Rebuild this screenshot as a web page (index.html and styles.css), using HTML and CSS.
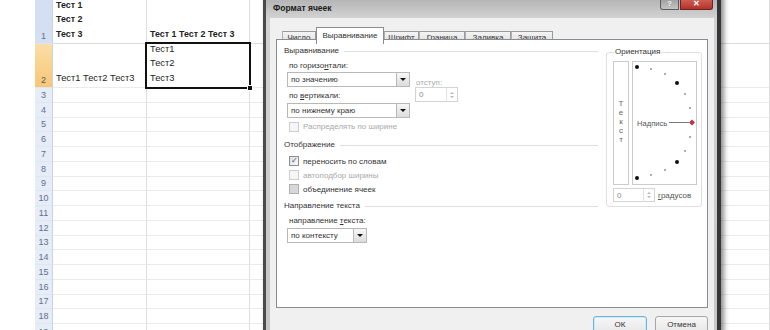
FILE: index.html
```html
<!DOCTYPE html>
<html lang="ru">
<head>
    <meta charset="UTF-8">
    <title>Формат ячеек</title>
    <link rel="stylesheet" href="styles.css">
</head>
<body>
    <div class="sheet">
        <div class="row tall">
            <div class="gap"></div>
            <div class="hd hd-one">1</div>
            <div class="cell ca bold"><span>Тест 1</span><span>Тест 2</span><span>Тест 3</span></div>
            <div class="cell cb bold"><span>Тест 1 Тест 2 Тест 3</span></div>
            <div class="cell cc"></div>
        </div>
        <div class="row tall">
            <div class="gap"></div>
            <div class="hd hd-sel">2</div>
            <div class="cell ca"><span>Тест1 Тест2 Тест3</span></div>
            <div class="cell cb sel"><span>Тест1</span><span>Тест2</span><span>Тест3</span><i class="handle"></i></div>
            <div class="cell cc"></div>
        </div>
        <div class="row"><div class="gap"></div><div class="hd">3</div><div class="cell ca"></div><div class="cell cb"></div><div class="cell cc"></div></div>
        <div class="row"><div class="gap"></div><div class="hd">4</div><div class="cell ca"></div><div class="cell cb"></div><div class="cell cc"></div></div>
        <div class="row"><div class="gap"></div><div class="hd">5</div><div class="cell ca"></div><div class="cell cb"></div><div class="cell cc"></div></div>
        <div class="row"><div class="gap"></div><div class="hd">6</div><div class="cell ca"></div><div class="cell cb"></div><div class="cell cc"></div></div>
        <div class="row"><div class="gap"></div><div class="hd">7</div><div class="cell ca"></div><div class="cell cb"></div><div class="cell cc"></div></div>
        <div class="row"><div class="gap"></div><div class="hd">8</div><div class="cell ca"></div><div class="cell cb"></div><div class="cell cc"></div></div>
        <div class="row"><div class="gap"></div><div class="hd">9</div><div class="cell ca"></div><div class="cell cb"></div><div class="cell cc"></div></div>
        <div class="row"><div class="gap"></div><div class="hd">10</div><div class="cell ca"></div><div class="cell cb"></div><div class="cell cc"></div></div>
        <div class="row"><div class="gap"></div><div class="hd">11</div><div class="cell ca"></div><div class="cell cb"></div><div class="cell cc"></div></div>
        <div class="row"><div class="gap"></div><div class="hd">12</div><div class="cell ca"></div><div class="cell cb"></div><div class="cell cc"></div></div>
        <div class="row"><div class="gap"></div><div class="hd">13</div><div class="cell ca"></div><div class="cell cb"></div><div class="cell cc"></div></div>
        <div class="row"><div class="gap"></div><div class="hd">14</div><div class="cell ca"></div><div class="cell cb"></div><div class="cell cc"></div></div>
        <div class="row"><div class="gap"></div><div class="hd">15</div><div class="cell ca"></div><div class="cell cb"></div><div class="cell cc"></div></div>
        <div class="row"><div class="gap"></div><div class="hd">16</div><div class="cell ca"></div><div class="cell cb"></div><div class="cell cc"></div></div>
        <div class="row"><div class="gap"></div><div class="hd">17</div><div class="cell ca"></div><div class="cell cb"></div><div class="cell cc"></div></div>
        <div class="row"><div class="gap"></div><div class="hd">18</div><div class="cell ca"></div><div class="cell cb"></div><div class="cell cc"></div></div>
        <div class="row last"><div class="gap"></div><div class="hd">19</div><div class="cell ca"></div><div class="cell cb"></div><div class="cell cc"></div></div>
    </div>

    <div class="dlg">
        <div class="titlebar">
            <span class="title">Формат ячеек</span>
            <div class="wbtns">
                <span class="wbtn help">?</span>
                <span class="wbtn close">&#x2715;</span>
            </div>
        </div>

        <div class="client">
            <div class="tabs">
                <span class="tab">Число</span>
                <span class="tab active">Выравнивание</span>
                <span class="tab">Шрифт</span>
                <span class="tab">Граница</span>
                <span class="tab">Заливка</span>
                <span class="tab">Защита</span>
            </div>

            <div class="panel">
                <div class="left">
                    <div class="group-title first">Выравнивание</div>
                    <div class="align-grid">
                        <div class="lbl"><span>по горизо<u>н</u>тали:</span></div>
                        <div></div>
                        <div class="combo"><span>по значению</span><i class="drop"></i></div>
                        <div class="lbl off small-lbl"><span>отступ:</span></div>
                        <div class="lbl"><span>по <u>в</u>ертикали:</span></div>
                        <div class="spin off"><span>0</span><i class="arrows"></i></div>
                        <div class="combo"><span>по нижнему краю</span><i class="drop"></i></div>
                        <div></div>
                        <div class="check off wide"><i class="box"></i><span>Распределять по ширине</span></div>
                    </div>

                    <div class="group-title">Отображение</div>
                    <div class="checks">
                        <div class="check"><i class="box on">&#x2713;</i><span>переносить по словам</span></div>
                        <div class="check off"><i class="box"></i><span>автоподбор ширины</span></div>
                        <div class="check"><i class="box mixed"></i><span>объединение ячеек</span></div>
                    </div>

                    <div class="group-title">Направление текста</div>
                    <div class="lbl dir-lbl"><span>направление <u>т</u>екста:</span></div>
                    <div class="combo short"><span>по контексту</span><i class="drop"></i></div>
                </div>

                <fieldset class="orient">
                    <legend>Ориентация</legend>
                    <div class="orient-row">
                        <div class="vbox">
                            <span>Т</span><span>е</span><span>к</span><span>с</span><span>т</span>
                        </div>
                        <div class="dial">
                            <svg width="63" height="122" viewBox="0 0 63 122">
                                <g fill="#111">
                                    <circle cx="4" cy="5" r="2"/>
                                    <circle cx="44" cy="21" r="2"/>
                                    <circle cx="44" cy="100" r="2"/>
                                    <circle cx="4" cy="116" r="2"/>
                                </g>
                                <g fill="#444">
                                    <circle cx="18" cy="7" r="0.8"/>
                                    <circle cx="32" cy="12" r="0.8"/>
                                    <circle cx="52" cy="32" r="0.8"/>
                                    <circle cx="57" cy="46" r="0.8"/>
                                    <circle cx="57" cy="75" r="0.8"/>
                                    <circle cx="52" cy="89" r="0.8"/>
                                    <circle cx="32" cy="108" r="0.8"/>
                                    <circle cx="18" cy="113" r="0.8"/>
                                </g>
                                <line x1="36" y1="60.5" x2="56" y2="60.5" stroke="#777" stroke-width="1"/>
                                <polygon points="59,57.5 62,60.5 59,63.5 56,60.5" fill="#c0344a"/>
                                <text x="4" y="63.5" font-family="Liberation Sans, sans-serif" font-size="7.6" fill="#555">Надпись</text>
                            </svg>
                        </div>
                    </div>
                    <div class="deg-row">
                        <div class="spin deg"><span>0</span><i class="arrows"></i></div>
                        <span class="deg-lbl"><u>г</u>радусов</span>
                    </div>
                </fieldset>
            </div>

            <div class="buttons">
                <span class="btn ok">ОК</span>
                <span class="btn">Отмена</span>
            </div>
        </div>
    </div>
</body>
</html>
```

FILE: styles.css
```css
body {
    margin: 0;
    width: 770px;
    height: 330px;
    overflow: hidden;
    position: relative;
    background: #fff;
    font-family: "Liberation Sans", Arial, sans-serif;
    color: #333;
}

/* spreadsheet behind the dialog */
.sheet {
    display: flex;
    flex-direction: column;
}
.row {
    display: flex;
    height: 14.75px;
    flex-shrink: 0;
}
.row.tall {
    height: 44px;
}
.gap {
    width: 35px;
    flex-shrink: 0;
}
.hd {
    width: 18px;
    flex-shrink: 0;
    box-sizing: border-box;
    background: #e6edf7;
    border-right: 1px solid #c5d3e6;
    border-bottom: 1px solid #dde6f2;
    color: #5f6f8e;
    font-size: 9px;
    display: flex;
    align-items: center;
    justify-content: center;
}
.row.last .hd {
    align-items: flex-start;
    padding-top: 3px;
}
.tall .hd {
    align-items: flex-end;
    padding-bottom: 2px;
}
.hd-one {
    background: #d4e0f1;
}
.hd-sel {
    background: linear-gradient(#fadea8, #f7c673);
    color: #4e5a72;
}
.cell {
    box-sizing: border-box;
    border-right: 1px solid #dedede;
    border-bottom: 1px solid #ebebeb;
    font-size: 9.3px;
    color: #222;
    display: flex;
    flex-direction: column;
    justify-content: flex-end;
    padding: 0 0 2px 3px;
    line-height: 14.5px;
}
.ca {
    width: 94px;
}
.cb {
    width: 103px;
}
.cc {
    flex: 1;
}
.bold {
    font-weight: bold;
    font-size: 8.9px;
}
.row.tall:first-child .cell {
    border-bottom-color: #dcdcdc;
}
.sel {
    position: relative;
}
.sel::after {
    content: "";
    position: absolute;
    left: -2px;
    top: -2px;
    right: -2px;
    bottom: -2px;
    border: 2px solid #111;
}
.handle {
    position: absolute;
    right: -4px;
    bottom: -4px;
    width: 4px;
    height: 4px;
    background: #111;
    border: 1px solid #fff;
    z-index: 1;
}

/* dialog window */
.dlg {
    position: absolute;
    left: 263px;
    top: -8px;
    width: 458px;
    height: 350px;
    box-sizing: border-box;
    border-left: 3px solid #4a4a4a;
    border-right: 4px solid #363636;
    background: linear-gradient(#a9a9a9, #d2d2d2 26px, #c6c6c6);
    box-shadow: 3px 0 5px rgba(0, 0, 0, 0.45);
    display: flex;
    flex-direction: column;
}
.titlebar {
    height: 26px;
    flex-shrink: 0;
    display: flex;
    justify-content: space-between;
    padding-left: 7px;
}
.title {
    font-size: 8.5px;
    font-weight: bold;
    color: #1a1a1a;
    line-height: 10px;
    padding-top: 11px;
}
.wbtns {
    display: flex;
    gap: 1px;
    margin: 6px 4px 0 0;
}
.wbtn {
    height: 12px;
    box-sizing: border-box;
    display: flex;
    align-items: center;
    justify-content: center;
    font-size: 8px;
    font-weight: bold;
    color: #fff;
    border: 1px solid #5d5d5d;
    border-top: none;
}
.help {
    width: 19px;
    background: linear-gradient(#9a9a9a, #c4c4c4);
    border-radius: 0 0 0 3px;
    color: #eee;
}
.close {
    width: 33px;
    background: linear-gradient(#d2675a, #b5322a);
    border-color: #6e2520;
    border-radius: 0 0 3px 0;
}

.client {
    flex: 1;
    margin: 0 3px 0 4px;
    background: #f0f0f0;
    padding: 0 6px;
    display: flex;
    flex-direction: column;
}
.tabs {
    margin-top: 9px;
    height: 12px;
    padding-left: 6px;
    display: grid;
    grid-template-columns: 34px 68px 35px 46px 46px 42px;
    align-items: end;
    font-size: 8px;
}
.tab {
    height: 12px;
    box-sizing: border-box;
    border: 1px solid #9a9a9a;
    border-bottom: none;
    border-left-color: #b0b0b0;
    background: linear-gradient(#f4f4f4, #dedede);
    display: flex;
    align-items: center;
    justify-content: center;
    color: #333;
}
.tab.active {
    height: 17px;
    margin-bottom: -1px;
    background: #fff;
    border-color: #8a8d95;
    position: relative;
    z-index: 1;
    padding-bottom: 2px;
}

.panel {
    height: 269px;
    box-sizing: border-box;
    border: 1px solid #898c95;
    background: #fff;
    display: flex;
    font-size: 8px;
}
.left {
    width: 321px;
    display: flex;
    flex-direction: column;
}
.group-title {
    height: 12px;
    line-height: 12px;
    padding-left: 7px;
    display: flex;
    align-items: center;
    gap: 5px;
    color: #333;
    margin-top: 4px;
}
.group-title::after {
    content: "";
    flex: 1;
    border-top: 1px solid #dcdfe3;
}
.group-title.first {
    margin-top: 5px;
}
.lbl {
    padding-left: 12px;
    display: flex;
    align-items: center;
    color: #333;
}
.off {
    color: #a9a9a9;
}
.align-grid {
    margin-top: 1px;
    display: grid;
    grid-template-columns: 133px 43px;
    grid-template-rows: 14px 15px 16px 15px 17px;
    column-gap: 5px;
}
.small-lbl {
    padding-left: 1px;
    align-items: flex-end;
}
.combo {
    margin-left: 10px;
    width: 123px;
    height: 15px;
    box-sizing: border-box;
    border: 1px solid #b8b8b8;
    display: flex;
    align-items: center;
    color: #333;
}
.combo span {
    flex: 1;
    padding-left: 3px;
}
.combo.short {
    width: 80px;
    margin-top: 1px;
}
.drop {
    width: 13px;
    height: 13px;
    box-sizing: border-box;
    border-left: 1px solid #b8b8b8;
    background: linear-gradient(#f7f7f7, #dcdcdc);
    display: flex;
    align-items: center;
    justify-content: center;
}
.drop::before {
    content: "";
    border-left: 3px solid transparent;
    border-right: 3px solid transparent;
    border-top: 3px solid #111;
}
.spin {
    width: 43px;
    height: 15px;
    box-sizing: border-box;
    border: 1px solid #d4d4d4;
    display: flex;
    align-items: center;
    align-self: start;
}
.spin span {
    flex: 1;
    padding-left: 3px;
    color: #888;
}
.arrows {
    width: 10px;
    height: 13px;
    border-left: 1px solid #e2e2e2;
    display: flex;
    flex-direction: column;
    align-items: center;
    justify-content: center;
    gap: 2px;
}
.arrows::before,
.arrows::after {
    content: "";
    border-left: 2px solid transparent;
    border-right: 2px solid transparent;
}
.arrows::before {
    border-bottom: 2px solid #b8b8b8;
}
.arrows::after {
    border-top: 2px solid #b8b8b8;
}
.check {
    padding-left: 12px;
    height: 14px;
    display: flex;
    align-items: center;
    gap: 4px;
}
.check.wide {
    grid-column: 1 / 3;
    height: auto;
}
.box {
    width: 10px;
    height: 10px;
    box-sizing: border-box;
    border: 1px solid #8e8f8f;
    background: linear-gradient(135deg, #dcdcdc, #fbfbfb);
    font-style: normal;
    font-size: 8px;
    line-height: 8px;
    text-align: center;
    color: #3e5497;
}
.check.off .box {
    border-color: #cdcdcd;
    background: #f6f6f6;
}
.box.mixed {
    border-color: #b0b0b0;
    background: #d8d8d8;
}
.checks {
    margin-top: 3px;
}
.dir-lbl {
    height: 14px;
    margin-top: 1px;
}

.orient {
    margin: 7px 0 0 8px;
    padding: 4px 0 0 6px;
    width: 96px;
    height: 160px;
    box-sizing: border-box;
    border: 1px solid #dcdfe3;
    border-radius: 3px;
}
.orient legend {
    padding: 0 1px;
    margin-left: 1px;
    line-height: 10px;
    color: #333;
}
.orient-row {
    display: flex;
    gap: 3px;
}
.vbox {
    width: 16px;
    height: 124px;
    box-sizing: border-box;
    border: 1px solid #cbcbcb;
    display: flex;
    flex-direction: column;
    align-items: center;
    justify-content: center;
    padding-bottom: 4px;
    line-height: 9px;
    color: #666;
}
.dial {
    width: 65px;
    height: 124px;
    box-sizing: border-box;
    border: 1px solid #cbcbcb;
}
.dial svg {
    display: block;
}
.deg-row {
    margin-top: 3px;
    display: flex;
    align-items: center;
    gap: 3px;
}
.spin.deg {
    width: 42px;
    height: 14px;
}
.deg-lbl {
    color: #555;
}

.buttons {
    margin-top: 8px;
    display: flex;
    justify-content: flex-end;
    gap: 8px;
}
.btn {
    width: 53px;
    height: 21px;
    box-sizing: border-box;
    border: 1px solid #a7a7a7;
    border-radius: 3px;
    background: linear-gradient(#f6f6f6, #e4e4e4);
    font-size: 8px;
    color: #333;
    text-align: center;
    line-height: 10px;
    padding-top: 3px;
}
.btn.ok {
    width: 54px;
    border-color: #6fb2d6;
    box-shadow: inset 0 0 0 1px #c8ecfa;
}
```
